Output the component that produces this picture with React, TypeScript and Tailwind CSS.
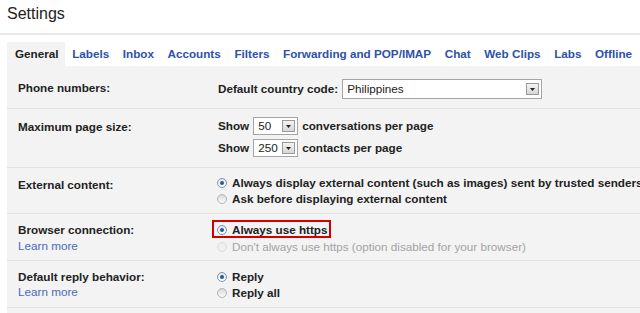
import React from "react";

function Radio({ checked = false, disabled = false }: { checked?: boolean; disabled?: boolean }) {
  return (
    <span
      className={
        "relative inline-block w-[10px] h-[10px] rounded-full border shrink-0 " +
        (disabled
          ? "border-[#dcdcdc] bg-[#f0f0f0]"
          : checked
          ? "border-[#7d94ad] bg-gradient-to-b from-[#dfe6ee] to-[#ffffff]"
          : "border-[#b3b3b3] bg-gradient-to-b from-[#d9d9d9] to-[#fbfbfb]")
      }
    >
      {checked && (
        <span className="absolute left-[2px] top-[2px] w-[4px] h-[4px] rounded-full bg-[#2a5c8e]" />
      )}
    </span>
  );
}

function DropButton() {
  return (
    <span className="flex items-center justify-center w-[13px] h-[12px] border border-[#9a9a9a] bg-gradient-to-b from-[#f4f4f4] to-[#d6d6d6]">
      <svg width="5" height="3" viewBox="0 0 5 3">
        <path d="M0 0h5L2.5 3z" fill="#222" />
      </svg>
    </span>
  );
}

function Select({ value, width }: { value: string; width: string }) {
  return (
    <span
      className={
        "inline-flex items-center justify-between bg-white border border-[#a5a5a5] pl-[4px] pr-[2px] font-normal text-[#222] " +
        width
      }
    >
      <span>{value}</span>
      <DropButton />
    </span>
  );
}

function RadioLine({
  label,
  checked,
  disabled,
}: {
  label: string;
  checked?: boolean;
  disabled?: boolean;
}) {
  return (
    <div className="flex items-center gap-[5px] h-[16px] whitespace-nowrap">
      <Radio checked={checked} disabled={disabled} />
      <span className={disabled ? "font-normal text-[#a3a3a3]" : ""}>{label}</span>
    </div>
  );
}

export default function App() {
  const tabs = [
    "General",
    "Labels",
    "Inbox",
    "Accounts",
    "Filters",
    "Forwarding and POP/IMAP",
    "Chat",
    "Web Clips",
    "Labs",
    "Offline",
  ];

  return (
    <div className="w-[640px] h-[313px] overflow-hidden bg-white font-['Liberation_Sans',Arial,sans-serif] text-[#222]">
      {/* Title */}
      <div className="h-[33px] pl-[7px] pt-[4px] text-[16px] leading-[20px]">Settings</div>
      <div className="h-[2px] bg-[#e8e8e8]" />

      {/* Tabs */}
      <div className="ml-[7px] mt-[7px] flex h-[24px] text-[11.7px] font-bold whitespace-nowrap">
        {tabs.map((t, i) => (
          <div
            key={t}
            className={
              "flex items-center px-[6.8px] " +
              (i === 0 ? "bg-[#f3f3f3] text-[#222] pl-[8px]" : "text-[#2d52a8]")
            }
          >
            {t}
          </div>
        ))}
      </div>

      {/* Panel */}
      <div className="ml-[7px] bg-[#f3f3f3] text-[11.7px] font-bold leading-[16px] h-[250px]">
        {/* Phone numbers */}
        <div className="flex border-b border-[#e0e0e0] pt-[13px] pb-[9px]">
          <div className="w-[210px] pl-[11px] pt-[1px]">Phone numbers:</div>
          <div className="flex items-center gap-[4px] h-[20px] whitespace-nowrap">
            <span className="pl-[1px]">Default country code:</span>
            <Select value="Philippines" width="w-[200px] h-[20px]" />
          </div>
        </div>

        {/* Max page size */}
        <div className="flex border-b border-[#e0e0e0] pt-[8px] pb-[10px]">
          <div className="w-[210px] pl-[11px] pt-[2px]">Maximum page size:</div>
          <div className="flex flex-col gap-[4px] whitespace-nowrap">
            <div className="flex items-center gap-[4px] h-[18px]">
              <span className="pl-[1px]">Show</span>
              <Select value="50" width="w-[45px] h-[18px]" />
              <span>conversations per page</span>
            </div>
            <div className="flex items-center gap-[4px] h-[18px]">
              <span className="pl-[1px]">Show</span>
              <Select value="250" width="w-[45px] h-[18px]" />
              <span>contacts per page</span>
            </div>
          </div>
        </div>

        {/* External content */}
        <div className="flex border-b border-[#e0e0e0] pt-[7px] pb-[6px]">
          <div className="w-[210px] pl-[11px] pt-[2px] shrink-0">External content:</div>
          <div>
            <RadioLine checked label="Always display external content (such as images) sent by trusted senders - Learn more" />
            <RadioLine label="Ask before displaying external content" />
          </div>
        </div>

        {/* Browser connection */}
        <div className="flex border-b border-[#e0e0e0] pt-[8px] pb-[5px]">
          <div className="w-[210px] pl-[11px] shrink-0">
            <div>Browser connection:</div>
            <div className="font-normal text-[#4a6bb8] leading-[15px]">Learn more</div>
          </div>
          <div>
            <div className="relative inline-block">
              <RadioLine checked label="Always use https" />
              <span className="absolute -left-[5px] -right-[4px] -top-[2px] bottom-0 border-2 border-[#d40000]" />
            </div>
            <RadioLine disabled label="Don't always use https (option disabled for your browser)" />
          </div>
        </div>

        {/* Reply behavior */}
        <div className="flex border-b border-[#e0e0e0] pt-[8px] pb-[6px]">
          <div className="w-[210px] pl-[11px] shrink-0">
            <div>Default reply behavior:</div>
            <div className="font-normal text-[#4a6bb8] leading-[14px]">Learn more</div>
          </div>
          <div>
            <RadioLine checked label="Reply" />
            <RadioLine label="Reply all" />
          </div>
        </div>
      </div>
    </div>
  );
}
